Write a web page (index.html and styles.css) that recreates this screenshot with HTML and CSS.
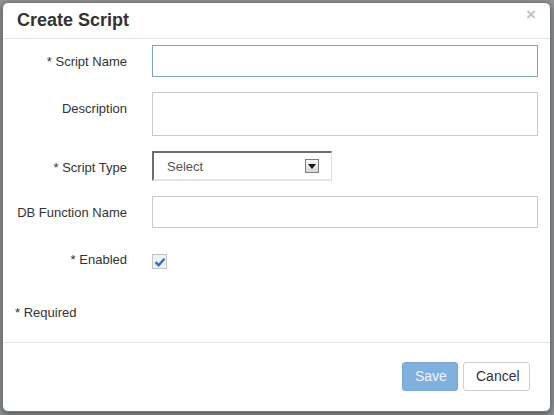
FILE: index.html
```html
<!DOCTYPE html>
<html>
<head>
<meta charset="utf-8">
<link rel="stylesheet" href="styles.css">
</head>
<body>
<div class="modal">
  <div class="modal-header">
    <h4 class="modal-title">Create Script</h4>
    <span class="close">×</span>
  </div>
  <div class="modal-body">
    <div class="form-grid">
      <label class="lbl">* Script Name</label>
      <div class="field"><div class="input focus"></div></div>

      <label class="lbl">Description</label>
      <div class="field"><div class="textarea"></div></div>

      <label class="lbl">* Script Type</label>
      <div class="field">
        <div class="select">
          <span class="select-text">Select</span>
          <span class="select-btn"><svg width="8" height="5" viewBox="0 0 8 5"><path d="M0 0H8L4 5Z" fill="#111"/></svg></span>
        </div>
      </div>

      <label class="lbl">DB Function Name</label>
      <div class="field"><div class="input"></div></div>

      <label class="lbl">* Enabled</label>
      <div class="field check-field">
        <span class="checkbox"><svg width="12" height="10" viewBox="0 0 12 10"><path d="M1.5 5.2L4.6 8.2L10.5 1.8" fill="none" stroke="#2f72c0" stroke-width="2.4"/></svg></span>
      </div>
    </div>
    <p class="required">* Required</p>
  </div>
  <div class="modal-footer">
    <button class="btn btn-primary">Save</button>
    <button class="btn btn-default">Cancel</button>
  </div>
</div>
</body>
</html>
```
FILE: styles.css
```css
html, body {
  margin: 0;
  padding: 0;
}
body {
  background: #8f9496;
  padding: 2px 0 0 2px;
  font-family: "Liberation Sans", Arial, sans-serif;
  color: #333;
  height: 415px;
  box-sizing: border-box;
  overflow: hidden;
}
.modal {
  width: 549px;
  height: 410px;
  box-sizing: border-box;
  background: #fff;
  border: 1px solid #777;
  border-radius: 6px;
  box-shadow: 0 2px 6px rgba(0,0,0,.45);
  display: flex;
  flex-direction: column;
}
.modal-header {
  padding: 7px 13px 8px 14px;
  box-sizing: border-box;
  height: 36px;
  border-bottom: 1px solid #e5e5e5;
  display: flex;
  justify-content: space-between;
  align-items: flex-start;
}
.modal-title {
  margin: 0;
  font-size: 18px;
  line-height: 20px;
  font-weight: bold;
  color: #333;
}
.close {
  font-size: 17px;
  font-weight: bold;
  line-height: 14px;
  color: #c4c4c4;
  margin-right: 1px;
  margin-top: -2px;
}
.modal-body {
  flex: 1;
  padding: 6px 12px 0 12px;
}
.form-grid {
  display: grid;
  grid-template-columns: 112px 386px;
  column-gap: 25px;
  row-gap: 15px;
}
.lbl {
  font-size: 13px;
  line-height: 20px;
  padding-top: 7px;
  text-align: right;
  white-space: nowrap;
}
.input {
  height: 32px;
  box-sizing: border-box;
  border: 1px solid #c9c9c9;
}
.input.focus {
  border-color: #7ea7b2;
}
.textarea {
  height: 44px;
  box-sizing: border-box;
  border: 1px solid #c9c9c9;
}
.select {
  width: 180px;
  height: 30px;
  box-sizing: border-box;
  border-top: 2px solid #6e6e6e;
  border-left: 2px solid #6e6e6e;
  border-right: 1px solid #dedede;
  border-bottom: 2px solid #e4e4e4;
  display: flex;
  align-items: center;
  justify-content: space-between;
  padding: 0 12px 0 13px;
}
.select-text {
  font-size: 13px;
  color: #555;
}
.select-btn {
  width: 14px;
  height: 14px;
  box-sizing: border-box;
  border: 1px solid #7d7d7d;
  background: linear-gradient(#f6f6f6, #d8d8d8);
  display: flex;
  align-items: center;
  justify-content: center;
}
.check-field {
  height: 32px;
  padding-top: 11px;
  box-sizing: border-box;
}
.checkbox {
  display: flex;
  width: 15px;
  height: 15px;
  box-sizing: border-box;
  border: 1px solid #c4c4c4;
  background: #eef1f7;
  align-items: center;
  justify-content: center;
}
.required {
  margin: 28px 0 0 0;
  font-size: 13px;
  line-height: 20px;
}
.modal-footer {
  height: 69px;
  box-sizing: border-box;
  border-top: 1px solid #e5e5e5;
  padding: 19px 20px 0 0;
  display: flex;
  justify-content: flex-end;
  align-items: flex-start;
  gap: 5px;
}
.btn {
  height: 29px;
  box-sizing: border-box;
  font-family: "Liberation Sans", Arial, sans-serif;
  font-size: 14px;
  border-radius: 3px;
  padding: 0 12px;
  line-height: 27px;
}
.btn-primary {
  width: 56px;
  background: #7fb0de;
  border: 1px solid #78a9d6;
  color: #eef4fb;
}
.btn-default {
  width: 67px;
  background: #fff;
  border: 1px solid #cfcfcf;
  color: #333;
}
```
